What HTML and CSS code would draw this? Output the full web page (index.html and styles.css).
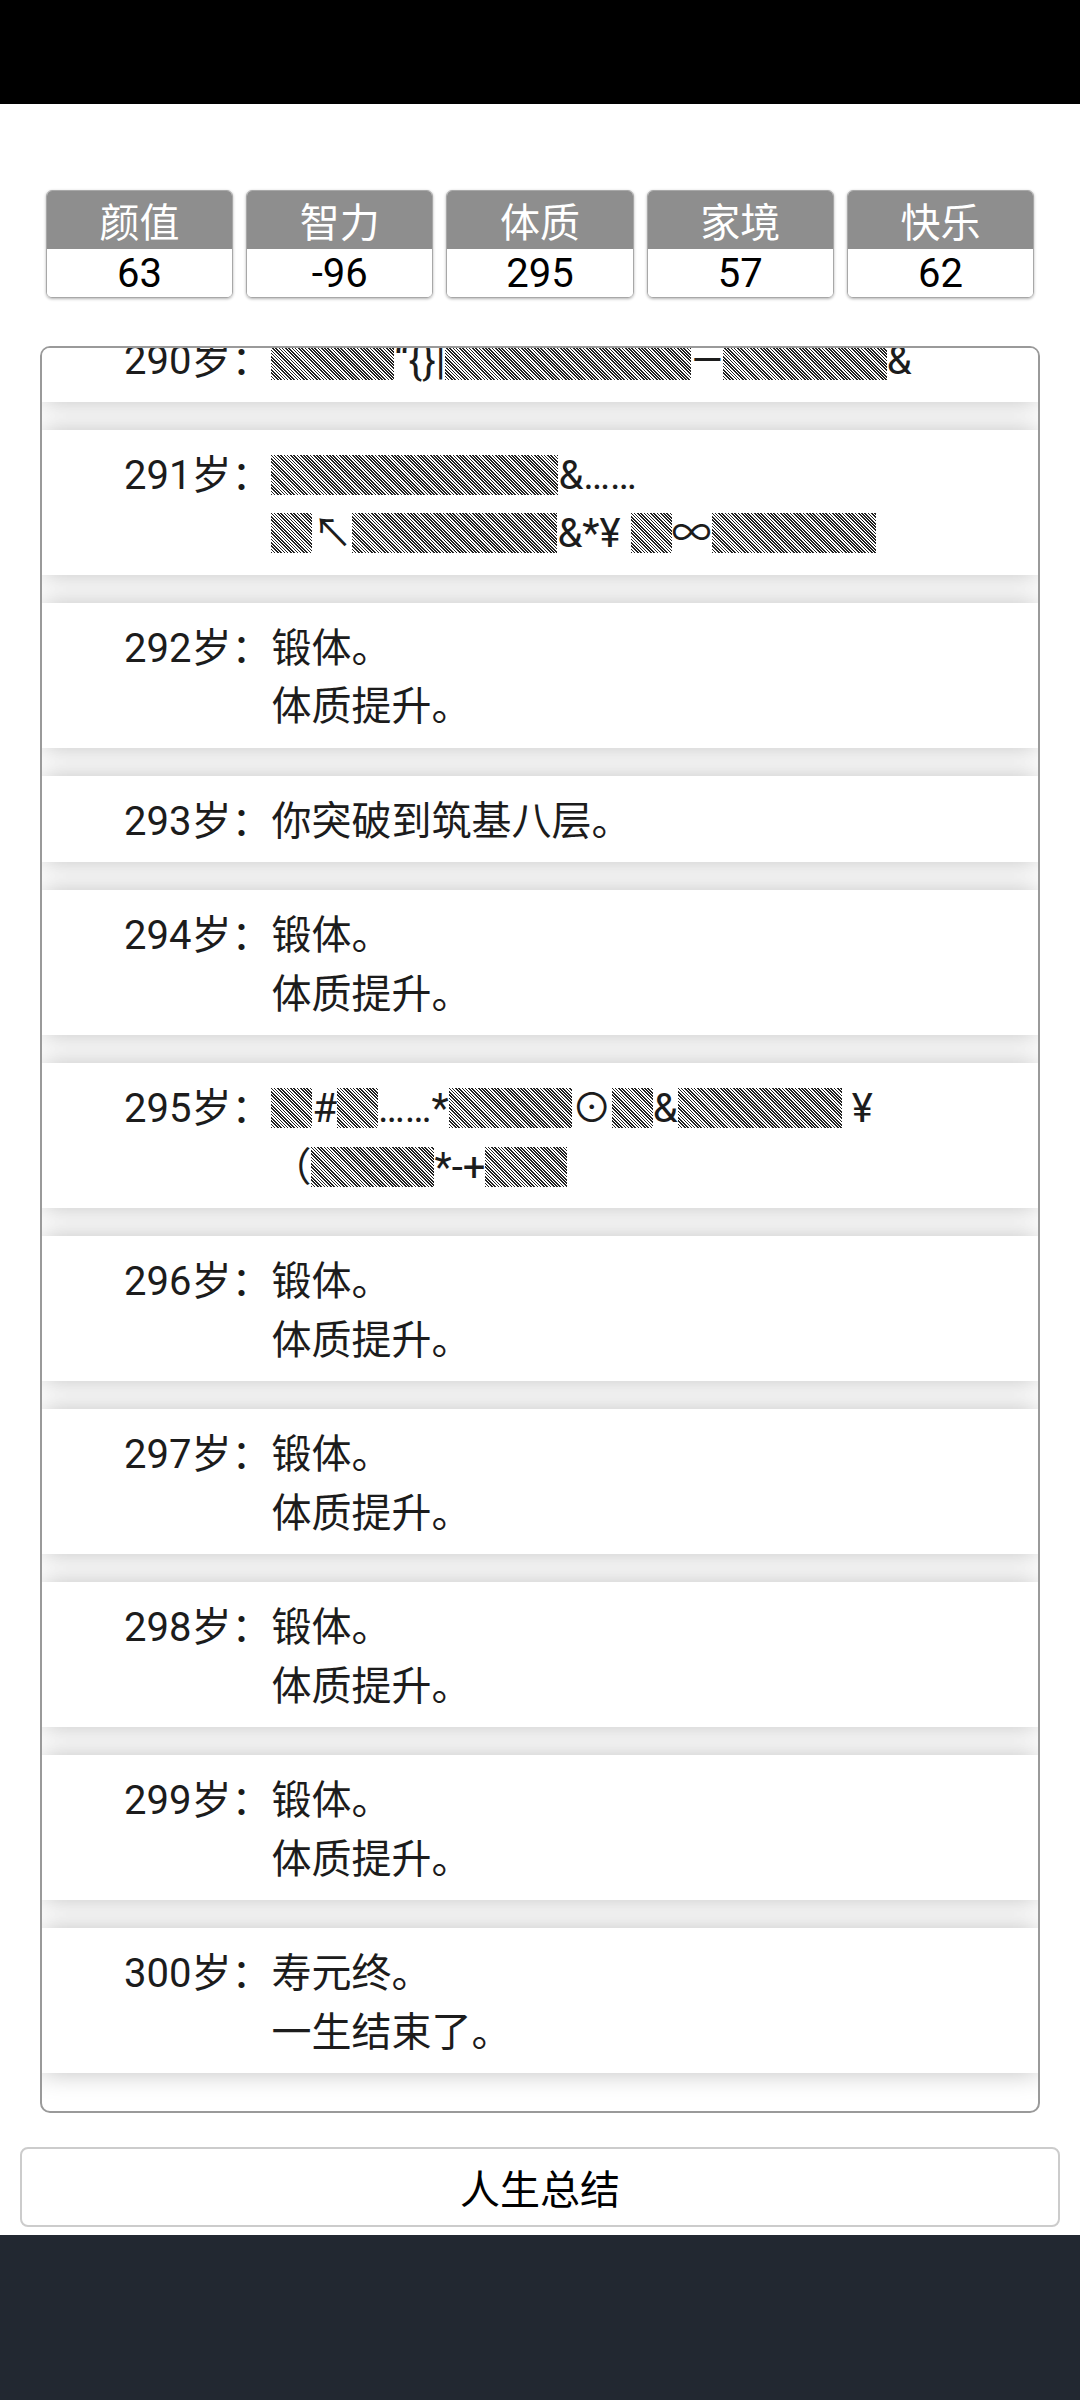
FILE: index.html
```html
<!DOCTYPE html>
<html lang="zh-CN">
<head>
    <meta charset="UTF-8">
    <meta name="viewport" content="width=device-width, initial-scale=1.0">
    <title>人生重开模拟器</title>
    <link rel="stylesheet" href="styles.css">
</head>
<body>
    <div class="status-bar"></div>

    <div id="main">
        <ul class="stats">
            <li><div class="stat-name">颜值</div><div class="stat-value">63</div></li>
            <li><div class="stat-name">智力</div><div class="stat-value">-96</div></li>
            <li><div class="stat-name">体质</div><div class="stat-value">295</div></li>
            <li><div class="stat-name">家境</div><div class="stat-value">57</div></li>
            <li><div class="stat-name">快乐</div><div class="stat-value">62</div></li>
        </ul>

        <ul id="lifeTrajectory" class="trajectory">
            <li><span class="age">288岁：</span><span class="event">锻体。<br>体质提升。</span></li>
            <li><span class="age">289岁：</span><span class="event">锻体。<br>体质提升。</span></li>
            <li><span class="age">290岁：</span><span class="event"><span class="glitch">▒▒▒</span>“{}|<span class="glitch">▒▒▒▒▒▒</span>—<span class="glitch">▒▒▒▒</span>&amp;</span></li>
            <li><span class="age">291岁：</span><span class="event"><span class="glitch">▒▒▒▒▒▒▒</span>&amp;……<br><span class="glitch">▒</span><span class="sym">↖</span><span class="glitch">▒▒▒▒▒</span>&amp;*¥ <span class="glitch">▒</span><span class="sym">∞</span><span class="glitch">▒▒▒▒</span></span></li>
            <li><span class="age">292岁：</span><span class="event">锻体。<br>体质提升。</span></li>
            <li><span class="age">293岁：</span><span class="event">你突破到筑基八层。</span></li>
            <li><span class="age">294岁：</span><span class="event">锻体。<br>体质提升。</span></li>
            <li><span class="age">295岁：</span><span class="event"><span class="glitch">▒</span>#<span class="glitch">▒</span>……*<span class="glitch">▒▒▒</span><span class="sym">⊙</span><span class="glitch">▒</span>&amp;<span class="glitch">▒▒▒▒</span> ¥<br>（<span class="glitch">▒▒▒</span>*-+<span class="glitch">▒▒</span></span></li>
            <li><span class="age">296岁：</span><span class="event">锻体。<br>体质提升。</span></li>
            <li><span class="age">297岁：</span><span class="event">锻体。<br>体质提升。</span></li>
            <li><span class="age">298岁：</span><span class="event">锻体。<br>体质提升。</span></li>
            <li><span class="age">299岁：</span><span class="event">锻体。<br>体质提升。</span></li>
            <li><span class="age">300岁：</span><span class="event">寿元终。<br>一生结束了。</span></li>
        </ul>

        <button id="summary">人生总结</button>
    </div>

    <div class="nav-bar"></div>

    <script>
        // keep the newest year in view
        const trajectory = document.getElementById('lifeTrajectory');
        trajectory.scrollTop = trajectory.scrollHeight;
    </script>
</body>
</html>
```

FILE: styles.css
```css
body {
    margin: 0;
    width: 1080px;
    background-color: #ffffff;
    font-family: Roboto, "Noto Sans CJK SC", sans-serif;
    font-size: 40px;
    color: #1c1c1c;
}

.status-bar {
    height: 104px;
    background-color: #000000;
}

#main {
    padding: 86px 20px 8px;
}

.stats {
    display: flex;
    gap: 13px;
    margin: 0 26px;
    padding: 0;
    list-style: none;
}

.stats li {
    flex: 1;
    border: 1px solid #a8a8a8;
    border-radius: 6px;
    overflow: hidden;
    box-shadow: 0 1px 3px rgba(0, 0, 0, 0.3);
    text-align: center;
}

.stat-name {
    height: 54px;
    padding-top: 4px;
    line-height: 58px;
    background-color: #8e8e8e;
    color: #ffffff;
}

.stat-value {
    height: 48px;
    line-height: 50px;
    background-color: #ffffff;
    color: #000000;
}

.trajectory {
    box-sizing: border-box;
    height: 1767px;
    margin: 48px 20px 0;
    padding: 0 0 10px;
    list-style: none;
    border: 2px solid #9a9a9a;
    border-radius: 10px;
    overflow: hidden;
}

.trajectory li {
    display: flex;
    margin-bottom: 28px;
    padding: 17px 20px 11px 82px;
    line-height: 58.5px;
    background-color: #ffffff;
    box-shadow: 0 0 24px rgba(0, 0, 0, 0.25);
}

.age {
    flex: none;
    white-space: nowrap;
}

.event {
    flex: 1;
}

.glitch {
    display: inline-block;
    height: 40px;
    line-height: 40px;
    vertical-align: -3px;
    letter-spacing: 1px;
    font-family: "Noto Sans CJK SC", sans-serif;
    color: transparent;
    background: repeating-linear-gradient(45deg, #222222 0 1.2px, #ffffff 1.2px 2.3px);
}

.sym {
    line-height: 1;
    font-family: "Noto Sans CJK SC", sans-serif;
}

#summary {
    display: block;
    width: 100%;
    height: 80px;
    margin-top: 34px;
    border: 2px solid #cccccc;
    border-radius: 8px;
    background-color: #ffffff;
    font-family: Roboto, "Noto Sans CJK SC", sans-serif;
    font-size: 40px;
    color: #000000;
}

.nav-bar {
    height: 165px;
    background-color: #222831;
}
```
